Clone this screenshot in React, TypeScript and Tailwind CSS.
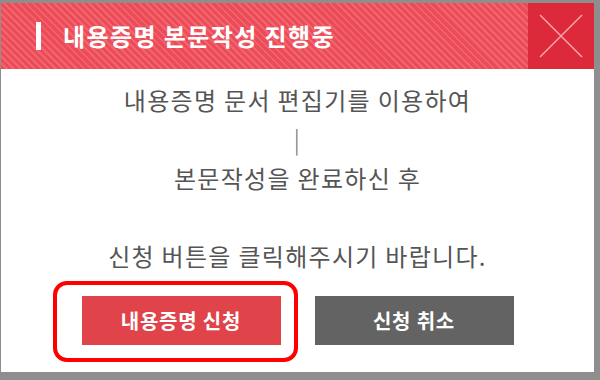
export default function App() {
  return (
    <div
      className="w-[600px] h-[380px] bg-[#8e8e8e] pt-[3px] pr-[6px] pb-[8px] pl-[1px]"
      style={{ fontFamily: '"Noto Sans CJK KR", "Noto Sans", sans-serif' }}
    >
      <div className="relative h-full bg-white flex flex-col">
        {/* header */}
        <div className="flex h-[66px] bg-[repeating-linear-gradient(45deg,#ec4c58_0px,#ec4c58_3px,#f2646e_3px,#f2646e_5px)]">
          <div className="flex-1 flex items-center pl-[35px]">
            <span className="w-[5px] h-[28px] bg-white mr-[22px]" />
            <span className="text-white font-bold text-[24px] leading-none tracking-[1.4px]">
              내용증명 본문작성 진행중
            </span>
          </div>
          <button className="w-[66px] h-[66px] bg-[#dd2a3b] flex items-center justify-center">
            <svg width="46" height="46" viewBox="0 0 46 46" fill="none" stroke="#f7a3aa" strokeWidth="1.5">
              <path d="M2 2L44 44M44 2L2 44" />
            </svg>
          </button>
        </div>
        <div className="h-[2px] bg-white" />

        {/* body */}
        <div className="flex flex-col items-center pt-[9px] text-[#555] text-[24px] leading-[39px] tracking-[1.3px]">
          <p>내용증명 문서 편집기를 이용하여</p>
          <p className="font-light text-[#666]">|</p>
          <p>본문작성을 완료하신 후</p>
          <p>&nbsp;</p>
          <p>신청 버튼을 클릭해주시기 바랍니다.</p>
        </div>

        <div className="flex justify-center gap-[34px] mt-[21px]">
          <button className="w-[199px] h-[49px] bg-[#e1434b] text-white font-bold text-[20px] tracking-[0.8px]">
            내용증명 신청
          </button>
          <button className="w-[199px] h-[49px] bg-[#636363] text-white font-bold text-[20px] tracking-[0.8px]">
            신청 취소
          </button>
        </div>

        {/* annotation */}
        <div className="absolute left-[52px] top-[278px] w-[245px] h-[81px] border-[4px] border-[#ff0000] rounded-[14px] pointer-events-none" />
      </div>
    </div>
  );
}
